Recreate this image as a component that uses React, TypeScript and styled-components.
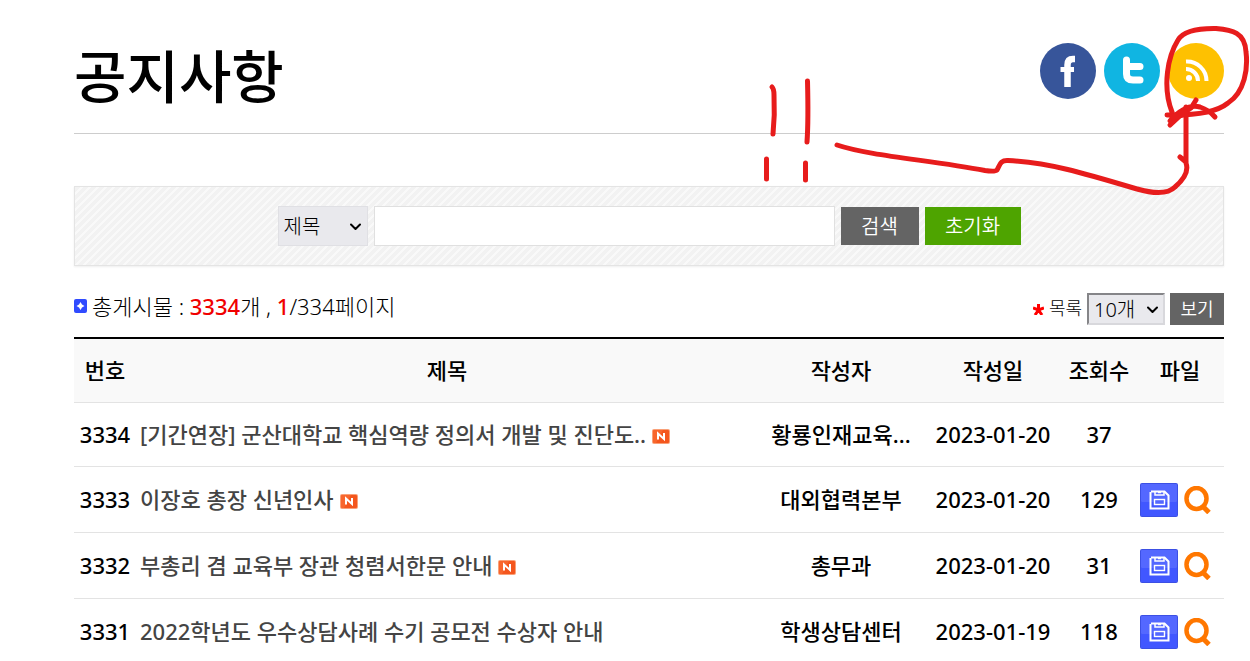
import React from 'react';
import styled, { createGlobalStyle } from 'styled-components';

const GlobalStyle = createGlobalStyle`
  *, *::before, *::after { box-sizing: border-box; }
  body {
    margin: 0;
    background: #fff;
    color: #000;
    font-family: "Noto Sans", "Noto Sans CJK KR", sans-serif;
    font-size: 22px;
    line-height: 32px;
    font-weight: 500;
  }
  button, input, select { font-family: inherit; font-weight: 300; margin: 0; }
`;

const Page = styled.main`
  position: relative;
  padding: 30px 26px 0 74px;
`;

const Header = styled.header`
  display: flex;
  justify-content: space-between;
  align-items: flex-start;
  height: 104px;
  border-bottom: 1px solid #cdcdcd;
`;

const Title = styled.h1`
  margin: 6px 0 0;
  font-size: 57px;
  line-height: 80px;
  font-weight: 500;
`;

const SocialList = styled.nav`
  display: flex;
  gap: 8px;
  padding-top: 13px;
`;

const SocialLink = styled.a<{ $color: string }>`
  display: block;
  width: 56px;
  height: 56px;
  border-radius: 50%;
  background: ${(p) => p.$color};
  svg { display: block; }
`;

const SearchForm = styled.form`
  display: flex;
  justify-content: center;
  align-items: center;
  gap: 6px;
  height: 80px;
  margin-top: 52px;
  border: 1px solid #e4e4e4;
  background: linear-gradient(135deg, #f2f2f2 36%, #f9f9f9 36% 50%, #f2f2f2 50% 86%, #f9f9f9 86%) 0 0 / 8px 8px;
  box-shadow: 0 1px 2px #eee;
`;

const SelectWrap = styled.span`
  position: relative;
  display: inline-flex;
  svg {
    position: absolute;
    right: 7px;
    top: 50%;
    margin-top: -3px;
    pointer-events: none;
  }
`;

const Select = styled.select<{ $inset?: boolean }>`
  appearance: none;
  width: ${(p) => (p.$inset ? 78 : 90)}px;
  height: ${(p) => (p.$inset ? 32 : 40)}px;
  padding: ${(p) => (p.$inset ? '1px 5px 0' : '2px 5px 0')};
  border: ${(p) => (p.$inset ? '2px inset #d8d8dc' : '1px solid #e0e0e4')};
  border-radius: 0;
  background: #e9e9ed;
  color: #000;
  font-size: 20px;
  line-height: 28px;
`;

const SearchInput = styled.input`
  flex: 0 1 461px;
  min-width: 0;
  height: 40px;
  padding: 0 8px;
  border: 1px solid #e0e0e0;
  background: #fff;
  font-size: 20px;
`;

const Button = styled.button<{ $green?: boolean; $small?: boolean }>`
  min-width: ${(p) => (p.$small ? 54 : p.$green ? 96 : 78)}px;
  height: ${(p) => (p.$small ? 32 : 38)}px;
  padding: ${(p) => (p.$small ? 0 : 2)}px 10px 0;
  border: 0;
  background: ${(p) => (p.$green ? '#4ea400' : '#646464')};
  color: #fff;
  font-size: ${(p) => (p.$small ? 18 : 20)}px;
  line-height: 28px;
  font-weight: 350;
  white-space: nowrap;
`;

const InfoBar = styled.div`
  display: flex;
  justify-content: space-between;
  align-items: center;
  margin: 27px 0 12px;
  font-weight: 300;
`;

const Summary = styled.p`
  display: flex;
  align-items: center;
  gap: 5px;
  margin: 0;
  padding-bottom: 6px;
  line-height: 26px;
  b { color: #f00000; font-weight: 500; }
`;

const PageSize = styled.form`
  display: flex;
  align-items: center;
  gap: 5px;
  label { font-size: 18px; line-height: 28px; padding-bottom: 2px; }
`;

const Table = styled.table`
  width: 100%;
  table-layout: fixed;
  border-collapse: separate;
  border-spacing: 0;
  border-top: 2px solid #000;
  th, td {
    height: 66px;
    padding: 0 0 2px;
    border-bottom: 1px solid #e3e3e3;
    text-align: center;
    white-space: nowrap;
  }
  th { height: 64px; background: #f9f9f9; font-weight: 500; }
  tbody tr:first-child td { height: 64px; }
`;

const Col = styled.col<{ $width?: number }>`
  width: ${(p) => (p.$width ? `${p.$width}px` : 'auto')};
`;

const SubjectCell = styled.td`
  && { text-align: left; padding-left: 4px; }
`;

const SubjectLink = styled.a`
  color: #444;
  text-decoration: none;
`;

const NewMark = styled.svg`
  margin-left: 6px;
  vertical-align: -1px;
`;

const FileTools = styled.div`
  display: flex;
  gap: 6px;
  padding: 2px 0 0 4px;
  align-items: center;
  a, svg { display: block; }
`;

const Annotation = styled.svg`
  position: absolute;
  top: 0;
  right: 0;
  width: 500px;
  height: 210px;
  pointer-events: none;
`;

const Chevron = () => (
  <svg width="11" height="8" viewBox="0 0 11 8" fill="none" stroke="#000" strokeWidth="2" strokeLinecap="round" strokeLinejoin="round" aria-hidden="true">
    <path d="M1 1.5 5.5 6 10 1.5" />
  </svg>
);

const New = () => (
  <NewMark width="18" height="15" viewBox="0 0 18 15" role="img" aria-label="새 글">
    <rect width="18" height="15" rx="2" fill="#f9a078" />
    <rect x="1" y="1" width="16" height="13" rx="1" fill="#f4561d" />
    <path d="M1 1h10L4 14H1z" fill="#fa7139" opacity=".6" />
    <path d="M6 10.5v-6l6 5.5v-6" fill="none" stroke="#fff" strokeWidth="2" />
  </NewMark>
);

const SaveIcon = () => (
  <svg width="38" height="34" viewBox="0 0 38 34" aria-hidden="true">
    <rect width="38" height="34" rx="2" fill="#3c50e4" />
    <rect x="1" y="1" width="36" height="18" rx="1" fill="#5468ff" />
    <rect x="1" y="19" width="36" height="14" fill="#4157ff" />
    <path d="M10.5 9v16.500h18V12.500L24.500 8.500H11" fill="none" stroke="#fff" strokeWidth="2" />
    <path d="M15 8v4h9V8" fill="none" stroke="#fff" strokeWidth="1.500" />
    <path d="M18 9.500h3" stroke="#fff" strokeWidth="1.500" />
    <rect x="14.500" y="16.500" width="10" height="5" fill="#5468ff" stroke="#fff" strokeWidth="1.400" />
  </svg>
);

const ViewIcon = () => (
  <svg width="27" height="28" viewBox="0 0 27 28" fill="none" stroke="#ff7700" aria-hidden="true">
    <ellipse cx="12.500" cy="12.500" rx="10" ry="10.500" strokeWidth="4.500" />
    <path d="M18.500 20 25 26.500" strokeWidth="5" />
  </svg>
);

type Post = { no: number; subject: string; isNew: boolean; author: string; date: string; hits: number; file: boolean };

const posts: Post[] = [
  { no: 3334, subject: '[기간연장] 군산대학교 핵심역량 정의서 개발 및 진단도..', isNew: true, author: '황룡인재교육...', date: '2023-01-20', hits: 37, file: false },
  { no: 3333, subject: '이장호 총장 신년인사', isNew: true, author: '대외협력본부', date: '2023-01-20', hits: 129, file: true },
  { no: 3332, subject: '부총리 겸 교육부 장관 청렴서한문 안내', isNew: true, author: '총무과', date: '2023-01-20', hits: 31, file: true },
  { no: 3331, subject: '2022학년도 우수상담사례 수기 공모전 수상자 안내', isNew: false, author: '학생상담센터', date: '2023-01-19', hits: 118, file: true },
];

export default function App() {
  return (
    <Page>
      <GlobalStyle />
      <Header>
        <Title>공지사항</Title>
        <SocialList aria-label="공유">
          <SocialLink href="#facebook" aria-label="페이스북" $color="#37559a">
            <svg width="56" height="56" viewBox="0 0 56 56" fill="none" stroke="#fff" strokeWidth="6.500">
              <path d="M35 16h-2q-5.500 0-5.500 6v22" />
              <path d="M20.500 26.500h13.500" strokeWidth="5" />
            </svg>
          </SocialLink>
          <SocialLink href="#twitter" aria-label="트위터" $color="#10b5e2">
            <svg width="56" height="56" viewBox="0 0 56 56" fill="none" stroke="#fff" strokeWidth="7" strokeLinecap="round">
              <path d="M22.500 17v14q0 6 6.500 6H36M23 23.500h13" />
            </svg>
          </SocialLink>
          <SocialLink href="#rss" aria-label="RSS" $color="#fec101">
            <svg width="56" height="56" viewBox="0 0 56 56" fill="none" stroke="#fff" strokeWidth="4">
              <circle cx="21" cy="35" r="3" fill="#fff" stroke="none" />
              <path d="M18 26a12 12 0 0 1 12 12M18 18.500A19.500 19.500 0 0 1 38.500 38" />
            </svg>
          </SocialLink>
        </SocialList>
      </Header>

      <SearchForm onSubmit={(e) => e.preventDefault()}>
        <SelectWrap>
          <Select aria-label="검색 항목"><option>제목</option></Select>
          <Chevron />
        </SelectWrap>
        <SearchInput type="text" aria-label="검색어" />
        <Button type="submit">검색</Button>
        <Button type="reset" $green>초기화</Button>
      </SearchForm>

      <InfoBar>
        <Summary>
          <svg width="13" height="14" viewBox="0 0 13 14" aria-hidden="true">
            <rect width="13" height="14" rx="2" fill="#304bff" />
            <path d="M6.500 3 8 5.500 10.500 7 8 8.500 6.500 11 5 8.500 2.500 7 5 5.500z" fill="#fff" />
          </svg>
          <span>총게시물 : <b>3334</b>개 , <b>1</b>/334페이지</span>
        </Summary>
        <PageSize onSubmit={(e) => e.preventDefault()}>
          <svg width="11" height="11" viewBox="0 0 11 11" stroke="#f00" strokeWidth="3" aria-hidden="true">
            <path d="M5.500 0v6M0 4l5.500 2L11 4M2 11l3.500-5L9 11" fill="none" />
          </svg>
          <label htmlFor="page-size">목록</label>
          <SelectWrap>
            <Select id="page-size" $inset><option>10개</option></Select>
            <Chevron />
          </SelectWrap>
          <Button type="submit" $small>보기</Button>
        </PageSize>
      </InfoBar>

      <Table>
        <colgroup>
          <Col $width={62} />
          <Col />
          <Col $width={166} />
          <Col $width={138} />
          <Col $width={74} />
          <Col $width={88} />
        </colgroup>
        <thead>
          <tr>
            <th>번호</th><th>제목</th><th>작성자</th><th>작성일</th><th>조회수</th><th>파일</th>
          </tr>
        </thead>
        <tbody>
          {posts.map((p) => (
            <tr key={p.no}>
              <td>{p.no}</td>
              <SubjectCell>
                <SubjectLink href={`#post-${p.no}`}>{p.subject}</SubjectLink>
                {p.isNew && <New />}
              </SubjectCell>
              <td>{p.author}</td>
              <td>{p.date}</td>
              <td>{p.hits}</td>
              <td>
                {p.file && (
                  <FileTools>
                    <a href={`#save-${p.no}`} aria-label="첨부파일 저장"><SaveIcon /></a>
                    <a href={`#view-${p.no}`} aria-label="첨부파일 보기"><ViewIcon /></a>
                  </FileTools>
                )}
              </td>
            </tr>
          ))}
        </tbody>
      </Table>

      <Annotation viewBox="750 0 500 210" fill="none" stroke="#e71c1c" strokeWidth="5" strokeLinecap="round" strokeLinejoin="round" aria-hidden="true">
        <path d="M772 87q2 2 2 8q1 20-1 39" />
        <path d="M807.500 81q1 40-.500 61" />
        <path d="M766.500 159v20M805.500 163v17" />
        <path d="M837 145C870 156 930 160 985 170.500Q995 172 997 170C1000 165 1000 160 1008 160.500C1050 163 1080 172 1137 189Q1165 197 1175 187Q1190 174 1186 163V107M1180 157l6 5" />
        <path d="M1167 115Q1212 116 1228 103C1245 92 1248 68 1246 52C1245 32 1232 30 1216 28.500Q1185 28 1178 40C1168 56 1162 86 1172 112" />
        <path d="M1170 125Q1180 115 1191 108L1196 100M1170 121Q1186 103 1200 107Q1209 110 1215 117" />
        <path d="M1173 117l12-4" strokeWidth="7" />
      </Annotation>
    </Page>
  );
}
